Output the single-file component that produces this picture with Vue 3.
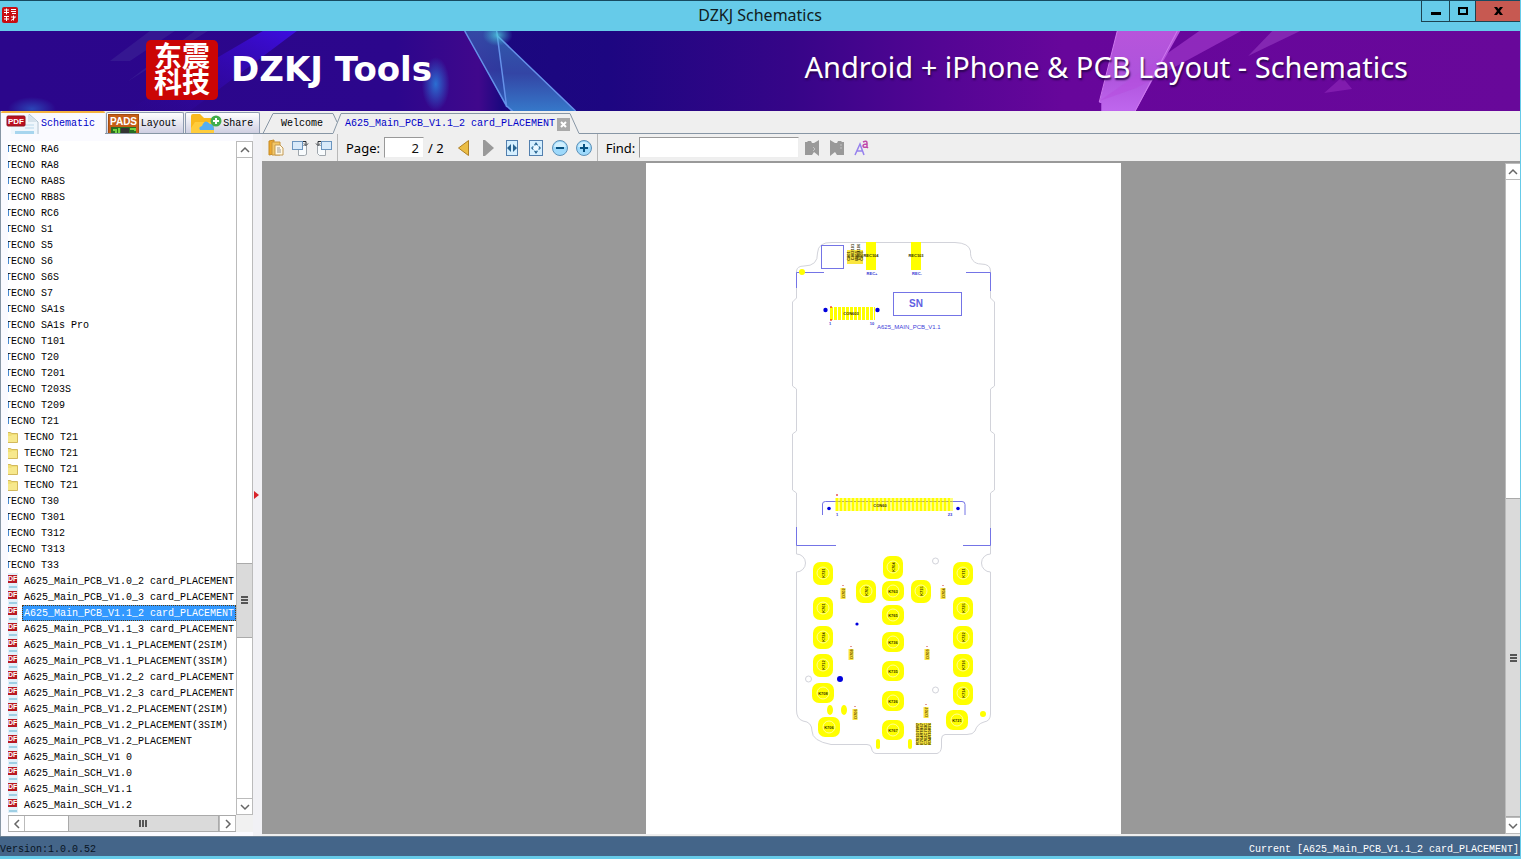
<script setup>
import { ref } from 'vue'

const folders = [
  'RA6', 'RA8', 'RA8S', 'RB8S', 'RC6', 'S1', 'S5', 'S6', 'S6S', 'S7', 'SA1s', 'SA1s Pro',
  'T101', 'T20', 'T201', 'T203S', 'T209', 'T21',
].map((n) => ({ kind: 'group', label: 'TECNO ' + n }))
const subFolders = [1, 2, 3, 4].map(() => ({ kind: 'folder', label: 'TECNO T21' }))
const moreFolders = ['T30', 'T301', 'T312', 'T313', 'T33'].map((n) => ({ kind: 'group', label: 'TECNO ' + n }))
const files = [
  'PCB_V1.0_2 card_PLACEMENT', 'PCB_V1.0_3 card_PLACEMENT', 'PCB_V1.1_2 card_PLACEMENT',
  'PCB_V1.1_3 card_PLACEMENT', 'PCB_V1.1_PLACEMENT(2SIM)', 'PCB_V1.1_PLACEMENT(3SIM)',
  'PCB_V1.2_2 card_PLACEMENT', 'PCB_V1.2_3 card_PLACEMENT', 'PCB_V1.2_PLACEMENT(2SIM)',
  'PCB_V1.2_PLACEMENT(3SIM)', 'PCB_V1.2_PLACEMENT', 'SCH_V1 0', 'SCH_V1.0', 'SCH_V1.1', 'SCH_V1.2',
].map((n) => ({ kind: 'pdf', label: 'A625_Main_' + n }))
const rows = [...folders, ...subFolders, ...moreFolders, ...files]

const current = ref('A625_Main_PCB_V1.1_2 card_PLACEMENT')
const page = ref('2')
const query = ref('')

function choose(row) {
  if (row.kind === 'pdf') current.value = row.label
}

const tallPads = [
  [823, 573, 'K731'], [823, 608, 'K761'], [823, 637, 'K724'], [823, 665, 'K712'],
  [866, 591, 'K702'], [893, 567, 'K704'], [921, 591, 'K715'],
  [963, 573, 'K711'], [963, 608, 'K725'], [963, 637, 'K722'], [963, 665, 'K716'], [963, 693, 'K714'],
]
const widePads = [
  [893, 591, 'K763'], [893, 615, 'K765'], [893, 642, 'K736'], [893, 671, 'K735'], [893, 701, 'K726'],
  [893, 730, 'K767'], [823, 693, 'K708'], [829, 727, 'K706'], [957, 720, 'K721'],
]
const parts = [
  [843, 593, 'D702'], [943, 593, 'D704'], [851, 654, 'D708'], [927, 654, 'D709'], [855, 714, 'D706'], [926, 712, 'D707'],
]
</script>

<template>
  <div class="window">
    <header class="titlebar">
      <svg class="app-icon" viewBox="0 0 16 16" aria-hidden="true">
        <rect width="16" height="16" rx="2" fill="#c80d12" />
        <path d="M2 3h5M4.500 1.500v6M2 5.500h5M9 2.500h5M9 4.500h5M10 6.500h4M2 9.500h5M4.500 9v5M2 12h5M9 10h5M11.500 8.500v5M9 13.500l4-3" stroke="#fff" fill="none" />
      </svg>
      <h1>DZKJ Schematics</h1>
      <div class="window-buttons">
        <button type="button" class="win min" aria-label="Minimize"><svg viewBox="0 0 12 12"><path d="M1 7h10v3H1z" /></svg></button>
        <button type="button" class="win max" aria-label="Maximize"><svg viewBox="0 0 12 12"><path d="M1 2h10v8H1zM3 4v4h6V4z" fill-rule="evenodd" /></svg></button>
        <button type="button" class="win close" aria-label="Close"><svg viewBox="0 0 12 12"><path d="M2 2h3l1.500 2L8 2h3L8 6l3 4H8L6.500 8 5 10H2l3-4z" /></svg></button>
      </div>
    </header>

    <section class="banner">
      <svg class="banner-art" viewBox="0 0 1521 80" preserveAspectRatio="none" aria-hidden="true">
        <defs>
          <linearGradient id="bg"><stop offset="0" stop-color="#2b068b" /><stop offset=".26" stop-color="#2c068c" /><stop offset=".315" stop-color="#40088c" /><stop offset=".33" stop-color="#1b087f" /><stop offset=".4" stop-color="#1d0681" /><stop offset=".52" stop-color="#360588" /><stop offset=".62" stop-color="#540594" /><stop offset=".7" stop-color="#67069b" /><stop offset="1" stop-color="#68089a" /></linearGradient>
          <linearGradient id="ray" x1="1" y1="0" x2="0" y2="1"><stop offset="0" stop-color="#3d0de0" /><stop offset="1" stop-color="#3007a0" stop-opacity="0" /></linearGradient>
          <linearGradient id="shard" x1="0" y1="0" x2="0" y2="1"><stop offset="0" stop-color="#3159ac" /><stop offset=".5" stop-color="#3345a5" /><stop offset="1" stop-color="#3678c9" /></linearGradient>
          <linearGradient id="pink" x1="0" y1="0" x2="0" y2="1"><stop offset="0" stop-color="#b755db" /><stop offset=".55" stop-color="#ae53dc" /><stop offset="1" stop-color="#bf67ee" /></linearGradient>
          <radialGradient id="glow"><stop offset="0" stop-color="#2b6ed2" /><stop offset="1" stop-color="#2b6ed2" stop-opacity="0" /></radialGradient>
          <radialGradient id="spark"><stop offset="0" stop-color="#4fd0e0" /><stop offset="1" stop-color="#42b6d8" stop-opacity="0" /></radialGradient>
        </defs>
        <rect width="1521" height="80" fill="url(#bg)" />
        <path d="M263 0h34L190 80h-64z" fill="url(#ray)" />
        <path d="M150 0h25l-45 30h-20zM195 0h13L127 51z" fill="#493a9e" opacity=".35" />
        <ellipse cx="436" cy="53" rx="14" ry="27" fill="url(#glow)" />
        <ellipse cx="32" cy="78" rx="24" ry="12" fill="url(#glow)" opacity=".6" />
        <path d="M465 0h32l10 77z" fill="url(#shard)" opacity=".8" />
        <path d="M498 5l78 75h-65l-5-6z" fill="url(#shard)" />
        <path d="M465 0l42 75 6 5M497 0l10 76M498 5l78 75" stroke="#6591e9" stroke-width="1.500" fill="none" />
        <ellipse cx="498" cy="4" rx="15" ry="11" fill="url(#spark)" opacity=".8" />
        <path d="M1118 0h63l-45 80h-34v-8h-2z" fill="url(#pink)" />
        <path d="M1200 0h42l-105 57-37 13z" fill="#b64bdd" opacity=".5" />
        <path d="M1273 0h28l-52 25z" fill="#a047c9" opacity=".5" />
        <path d="M1118 0l-18 71M1178 0l-42 80" stroke="#cf79ef" fill="none" />
        <path d="M1343 46l10 12-28 4z" fill="#8b25b7" opacity=".7" />
      </svg>
      <div class="seal"><span>东震</span><span>科技</span></div>
      <strong class="brand">DZKJ Tools</strong>
      <p class="slogan">Android + iPhone &amp; PCB Layout - Schematics</p>
    </section>

    <main class="work">
      <aside class="sidebar">
        <nav class="side-tabs">
          <button type="button" class="side-tab active">
            <svg width="34" height="20" viewBox="0 0 34 20" aria-hidden="true">
              <path d="M6 1h20l6 6v13H6z" fill="#eff6fc" />
              <path d="M24 0l9 8v12" fill="none" stroke="#abc0ce" /><path d="M23 0v8h9z" fill="#d5e2eb" />
              <path d="M10 17h19v3H10z" fill="#a7d5ee" /><path d="M20 11h9M20 14h9" stroke="#b9d8eb" />
              <rect x="2" y="2" width="18" height="10" rx="1" fill="#bd1020" stroke="#8f1420" />
              <text x="3" y="10" class="badge">PDF</text>
            </svg>
            <span>Schematic</span>
          </button>
          <button type="button" class="side-tab layout-tab">
            <svg width="31" height="19" viewBox="0 0 31 19" aria-hidden="true">
              <rect x=".5" y=".5" width="30" height="19" fill="#c45d16" stroke="#a44c10" />
              <path d="M3 13h25v6H3z" fill="#286d22" /><path d="M5 16h3v3M11 14v5M22 15h5v2" stroke="#71d341" stroke-width="2" fill="none" /><path d="M13 14h8v5h-8z" fill="#333" />
              <text x="2" y="11" class="pads">PADS</text>
            </svg>
            <span>Layout</span>
          </button>
          <button type="button" class="side-tab share-tab">
            <svg width="32" height="19" viewBox="0 0 32 19" aria-hidden="true">
              <path d="M1 2q0-2 2-2h7l4 4h7v15H1z" fill="#f9b91d" /><path d="M1 19v-5l4-6h19v11z" fill="#ffcc3c" />
              <path d="M10 16q-2-3 2-4 3-8 8-2 4-1 4 6z" fill="#55aef2" />
              <circle cx="26" cy="7" r="5.500" fill="#42ad4b" /><path d="M23 7h6M26 4v6" stroke="#fff" stroke-width="2" />
            </svg>
            <span>Share</span>
          </button>
        </nav>
        <div class="side-body">
          <div class="tree-pane">
            <div class="tree-view">
              <ul class="tree">
                <li v-for="(row, i) in rows" :key="i">
                  <button type="button" class="row" :class="[row.kind, { selected: row.label === current }]" @click="choose(row)">
                    <svg v-if="row.kind === 'folder'" width="16" height="16" viewBox="0 0 16 16" aria-hidden="true">
                      <path d="M1 13.500V3.500h7l2 1h5.500v9z" fill="#f1df75" stroke="#d3b95c" /><path d="M1 7h8l1-1h5v7H1z" fill="#f7e88c" />
                    </svg>
                    <svg v-else-if="row.kind === 'pdf'" width="16" height="16" viewBox="0 0 16 16" aria-hidden="true">
                      <path d="M4 0h12v16H4z" fill="#e3f0f9" /><path d="M7 13h8v2H7z" fill="#9ecfe4" />
                      <rect x="0" y="2" width="15" height="8" fill="#b91823" /><text x="6" y="8" class="df">DF</text>
                    </svg>
                    <span>{{ row.label }}</span>
                  </button>
                </li>
              </ul>
            </div>
            <div class="vbar">
              <button type="button" class="step" aria-label="Scroll up"><svg viewBox="0 0 10 10"><path d="M1 7l4-4 4 4" /></svg></button>
              <div class="before"></div>
              <div class="thumb"><i></i></div>
              <div class="after"></div>
              <button type="button" class="step" aria-label="Scroll down"><svg viewBox="0 0 10 10"><path d="M1 3l4 4 4-4" /></svg></button>
            </div>
            <div class="hbar">
              <button type="button" class="step" aria-label="Scroll left"><svg viewBox="0 0 10 10"><path d="M7 1L3 5l4 4" /></svg></button>
              <div class="before"></div>
              <div class="thumb"><i></i></div>
              <button type="button" class="step" aria-label="Scroll right"><svg viewBox="0 0 10 10"><path d="M3 1l4 4-4 4" /></svg></button>
            </div>
            <div class="corner"></div>
          </div>
          <button type="button" class="splitter" aria-label="Collapse panel"><svg width="5" height="8" viewBox="0 0 5 8"><path d="M0 0l5 4-5 4z" fill="#d8232a" /></svg></button>
        </div>
      </aside>

      <section class="document">
        <nav class="doc-tabs">
          <button type="button" class="doc-tab welcome">
            <svg class="edge" width="80" viewBox="0 0 80 23" aria-hidden="true"><path d="M1 22.500L11 2.500H71L75 11" /></svg>
            <span>Welcome</span>
          </button>
          <button type="button" class="doc-tab opened">
            <svg class="edge" width="247" viewBox="0 0 247 23" aria-hidden="true"><path d="M0 22.500L8 2.500H237L246 22.500" /></svg>
            <span>{{ current }}</span>
            <svg class="tab-close" viewBox="0 0 13 13" aria-hidden="true"><rect width="13" height="13" fill="#a9a9a9" /><path d="M4 4l5 5M9 4l-5 5" stroke="#fff" stroke-width="2" /></svg>
          </button>
          <div class="rest"></div>
        </nav>

        <div class="toolbar">
          <div class="tools first">
            <button type="button" class="tool" aria-label="Open"><svg viewBox="0 0 18 18"><path d="M2 2l5-1v14l-5 1z" fill="#eda82d" stroke="#c58a25" /><path d="M5 3h8v13H5z" fill="#f3c765" stroke="#ca963c" /><path d="M8 6h5l3 3v7H8z" fill="#fff8e4" stroke="#c39a55" /><path d="M10 9h3M10 11h4M10 13h4" stroke="#999" /></svg></button>
            <button type="button" class="tool" aria-label="Rotate right"><svg viewBox="0 0 18 18"><path d="M7.500 6.500h8v9l-2 1h-6z" fill="#f8fbfd" stroke="#a0a7ad" /><rect x="1.500" y="2.500" width="10" height="8" fill="#d8eafa" stroke="#6b95bf" /><path d="M12 2.500h3v3M13 4.500l2 2 2-2" stroke="#262b30" fill="none" /></svg></button>
            <button type="button" class="tool" aria-label="Rotate left"><svg viewBox="0 0 18 18"><path d="M2.500 6.500h8v10h-6l-2-2z" fill="#f8fbfd" stroke="#a0a7ad" /><rect x="6.500" y="2.500" width="10" height="8" fill="#d8eafa" stroke="#6b95bf" /><path d="M6 2.500H3v3M1 4.500l2 2 2-2" stroke="#262b30" fill="none" /></svg></button>
          </div>
          <div class="tools paging">
            <label for="page">Page:</label>
            <input id="page" v-model="page" type="text" />
            <span>/ 2</span>
          </div>
          <div class="tools view">
            <button type="button" class="tool" aria-label="Previous page"><svg viewBox="0 0 18 18"><path d="M13.500 1.500v15L3.500 9z" fill="#ebbd45" stroke="#af8126" /></svg></button>
            <button type="button" class="tool" aria-label="Next page"><svg viewBox="0 0 18 18"><path d="M4 1h2l9 8-9 8H4z" fill="#999" /></svg></button>
            <button type="button" class="tool" aria-label="Fit width"><svg viewBox="0 0 18 18"><rect x="3.500" y="1.500" width="11" height="15" fill="#d5efff" stroke="#527fae" /><path d="M8 5v8L4 9zM10 5v8l4-4z" fill="#286390" /></svg></button>
            <button type="button" class="tool" aria-label="Fit page"><svg viewBox="0 0 18 18"><rect x="2.500" y="1.500" width="13" height="15" fill="#d5efff" stroke="#527fae" /><path d="M9 3l2 3H7zM9 15l2-3H7zM4 9l2-2v4zM14 9l-2-2v4z" fill="#286390" /><circle cx="9" cy="9" r="3" fill="#eef9ff" stroke="#7aaed0" stroke-dasharray="2 1" /></svg></button>
            <button type="button" class="tool" aria-label="Zoom out"><svg viewBox="0 0 18 18"><circle cx="9" cy="9" r="7.500" fill="#9ed9fb" stroke="#5e91b8" /><path d="M3 8q1-5 6-5t6 5z" fill="#d0effe" /><path d="M5 9h8" stroke="#075282" stroke-width="2" /></svg></button>
            <button type="button" class="tool" aria-label="Zoom in"><svg viewBox="0 0 18 18"><circle cx="9" cy="9" r="7.500" fill="#9ed9fb" stroke="#5e91b8" /><path d="M3 8q1-5 6-5t6 5z" fill="#d0effe" /><path d="M5 9h8M9 5v8" stroke="#075282" stroke-width="2" /></svg></button>
          </div>
          <div class="tools finding">
            <label for="find">Find:</label>
            <input id="find" v-model="query" type="text" />
            <button type="button" class="tool" aria-label="Find previous"><svg viewBox="0 0 18 18"><path d="M2 3h2l1-1h3l1 2h2l5-3v16l-5-4-2 3H2z" fill="#999" /><path d="M10 8l2 2-2 2" stroke="#c2c2c2" fill="none" /></svg></button>
            <button type="button" class="tool" aria-label="Find next"><svg viewBox="0 0 18 18"><path d="M16 3h-2l-1-1h-3L9 4H7L2 1v16l5-4 2 3h7z" fill="#999" /><path d="M12 6h2M12 9h2" stroke="#c2c2c2" /></svg></button>
            <button type="button" class="tool" aria-label="Match case"><svg viewBox="0 0 18 18"><path d="M2 16L7 5l4 11M4 12h6" stroke="#9681ed" stroke-width="1.500" fill="none" /><path d="M10 3q4-2 4 1v5M14 5q-4 0-4 2t4 1l1 1" stroke="#c148ab" stroke-width="1.500" fill="none" /></svg></button>
          </div>
        </div>

        <div class="viewer">
          <div class="canvas">
            <svg class="sheet" viewBox="646 163 475 671" preserveAspectRatio="xMidYMin meet" role="img" aria-label="Board placement drawing">
              <path class="outline" d="M832 242.500H955Q969 243 970.500 251C970 259 974 264 981 264Q990.500 264 990.500 271V298L994.500 302V386L990.500 389V431L994.500 434V490L990.500 493V554A9 9 0 0 0 990.500 572V714Q990.500 721 984 722Q977 724 975 731Q973 734.500 967 734.500H945Q941.500 735 941.500 739V747Q941 752.500 937 753.500H876Q872 753 871.500 748Q871 744.500 867 744.500H831Q812 741 812 731Q812 722 803 721Q796.500 719 796.500 710V572A9 9 0 0 0 796.500 554V493L792.500 490V434L796.500 431V389L792.500 386V302L796.500 298V271Q797 266 804 266Q818 266 817.500 253Q818 242 832 242.500Z" />
              <g class="blue">
                <rect x="821.500" y="245.500" width="22" height="23" />
                <path d="M796.500 288V272.500H824M966 272.500h24.500V291M796.500 527v18.500H836M963 545.500h27.500V528" />
                <rect x="893.500" y="292.500" width="68" height="23" />
                <path d="M822.500 515V504q0-2.500 3-2.500H962q3 0 3 3V515" />
              </g>
              <g fill="#ff0">
                <rect x="866" y="242" width="10" height="28" /><rect x="911" y="242" width="10" height="28" />
                <circle cx="802" cy="272" r="3" />
                <ellipse cx="830" cy="710" rx="3" ry="5" /><ellipse cx="844" cy="710" rx="3" ry="5" />
                <rect x="876" y="739" width="4" height="10" rx="2" /><rect x="908" y="739" width="4" height="10" rx="2" /><circle cx="983" cy="714" r="3" />
              </g>
              <path d="M830 313.500h45" stroke="#ff0" stroke-width="13" stroke-dasharray="3 1" />
              <path d="M835.500 504.500h117" stroke="#ff0" stroke-width="13" stroke-dasharray="3 1" />
              <path d="M836 501.500h116" stroke="#b4a53a" stroke-width=".5" stroke-dasharray="2 1" />
              <g fill="#00d"><circle cx="825.500" cy="310" r="2.200" /><circle cx="877.500" cy="310" r="2.200" /><circle cx="829" cy="508.500" r="1.800" /><circle cx="958" cy="508.500" r="1.800" /><circle cx="857" cy="624" r="1.600" /><circle cx="840" cy="679" r="3" /></g>
              <g class="outline"><circle cx="935.500" cy="561" r="3" /><circle cx="935.500" cy="690" r="3" /><circle cx="808.500" cy="679" r="3" /></g>
              <path d="M830 307h2M830 320h2M836 495h2" stroke="#d00" />

              <g v-for="p in tallPads" :key="'t' + p[2]" :transform="`translate(${p[0]} ${p[1]})`">
                <rect x="-10" y="-11" width="20" height="23" rx="7" fill="#ff0" /><circle class="ring" r="6" />
                <text class="tiny" transform="rotate(-90)" y="1.500">{{ p[2] }}</text>
              </g>
              <g v-for="p in widePads" :key="'w' + p[2]" :transform="`translate(${p[0]} ${p[1]})`">
                <rect x="-11" y="-10" width="22" height="20" rx="7" fill="#ff0" /><circle class="ring" r="6" />
                <text class="tiny" y="1.500">{{ p[2] }}</text>
              </g>
              <g v-for="p in parts" :key="p[2]" :transform="`translate(${p[0]} ${p[1]})`">
                <rect x="-2.500" y="-5" width="5" height="11" fill="#fae63f" /><path d="M0-8v1" stroke="#c33" />
                <text class="tiny brown" transform="rotate(-90)" y="1.500">{{ p[2] }}</text>
              </g>
              <g transform="translate(850 256)">
                <rect x="-3" y="-6" width="16" height="14" fill="#fae63f" />
                <g transform="rotate(-90)"><text class="tiny" y="0">C801</text><text class="tiny" x="4" y="4">C802101</text><text class="tiny" y="8">R803</text><text class="tiny" x="4" y="10">D804106</text><text class="tiny" y="13">C805</text></g>
              </g>
              <g transform="translate(917 734)">
                <rect x="-1" y="-11" width="15" height="22" fill="#fae63f" />
                <g transform="rotate(-90)"><text class="tiny" y="2">R701D70R7</text><text class="tiny" y="6">E764R7B67</text><text class="tiny" y="10">C702C703C</text><text class="tiny" y="14">R74R70R76</text></g>
              </g>
              <text class="tiny" x="871" y="257">REC104</text><text class="tiny" x="916" y="257">REC103</text>
              <text class="tiny blue-text" x="872" y="275">REC+</text><text class="tiny blue-text" x="917" y="275">REC-</text>
              <text class="tiny" x="851" y="315">CON603</text><text class="tiny" x="880" y="507">CON60</text>
              <text class="tiny blue-text" x="830" y="325">1</text><text class="tiny blue-text" x="872" y="325">10</text>
              <text class="tiny blue-text" x="837" y="516">1</text><text class="tiny blue-text" x="950" y="516">23</text>
              <text class="sn" x="909" y="307">SN</text>
              <text class="board-name" x="877" y="329">A625_MAIN_PCB_V1.1</text>
            </svg>
          </div>
          <div class="vbar doc-bar">
            <button type="button" class="step" aria-label="Page up"><svg viewBox="0 0 10 10"><path d="M1 7l4-4 4 4" /></svg></button>
            <div class="before"></div>
            <div class="thumb"><i></i></div>
            <button type="button" class="step" aria-label="Page down"><svg viewBox="0 0 10 10"><path d="M1 3l4 4 4-4" /></svg></button>
          </div>
        </div>
      </section>
    </main>

    <footer class="status"><span>Version:1.0.0.52</span><span class="now">Current [{{ current }}]</span></footer>
  </div>
</template>

<style>
body { margin: 0; overflow: hidden; }
</style>

<style scoped>
* { box-sizing: border-box; }
button { margin: 0; padding: 0; border: 0; background: none; font: inherit; color: inherit; }
svg { display: block; flex: none; }
.window { height: 100vh; display: flex; flex-direction: column; background: #efefef; border-right: 1px solid #66cbe9; border-bottom: 3px solid #66cbe9; font: 10px/16px "Liberation Mono", monospace; color: #000; }

.titlebar { flex: none; height: 31px; display: grid; grid-template-columns: 100px 1fr 100px; background: #66cbe9; border-top: 1px solid #174a60; }
.app-icon { width: 16px; height: 16px; margin: 6px 2px; }
h1 { margin: 0; text-align: center; font: 16px/29px "Noto Sans", sans-serif; color: #101c22; }
.window-buttons { display: flex; justify-content: flex-end; align-items: flex-start; }
.win { height: 21px; display: flex; align-items: center; justify-content: center; border: 1px solid #1d4250; border-top: 0; border-right: 0; }
.win svg { width: 12px; height: 12px; }
.min { width: 28px; }
.max { width: 26px; }
.close { width: 45px; background: #c75951; }

.banner { position: relative; flex: none; height: 80px; display: flex; align-items: center; padding: 0 112px 0 146px; overflow: hidden; color: #fff; }
.banner-art { position: absolute; inset: 0; width: 100%; height: 100%; }
.seal { position: relative; width: 72px; height: 60px; margin-bottom: 2px; padding-bottom: 4px; border-radius: 5px; background: #cb0505; display: flex; flex-direction: column; align-items: center; justify-content: center; font: bold 28px/26px "Noto Sans CJK SC", sans-serif; }
.brand { position: relative; margin: 0 0 4px 13px; font: bold 34px/40px "DejaVu Sans", sans-serif; white-space: nowrap; }
.slogan { position: relative; margin: 0 0 8px auto; font: 29px/40px "Noto Sans", sans-serif; text-shadow: 1px 2px 2px #2b0550; white-space: nowrap; }

.work { flex: 1; min-height: 0; display: flex; }
.sidebar { flex: none; width: 262px; display: flex; flex-direction: column; border-left: 1px solid #8796a5; background: #fafaff; }
.side-tabs { flex: none; height: 23px; display: flex; align-items: flex-end; gap: 1px; padding-right: 2px; background: #efefef; border-bottom: 1px solid #8796a5; }
.side-tab { height: 21px; flex: 1 1 74px; display: flex; align-items: center; gap: 1px; padding: 1px 2px 0 1px; border: 1px solid #8e9bb0; border-bottom: 0; border-radius: 2px 2px 0 0; background: linear-gradient(#fff, #cfcfe2); overflow: hidden; }
.side-tab.active { height: 23px; flex: 1 1 103px; margin-bottom: -1px; padding-left: 4px; gap: 2px; border: 0; border-top: 2px solid #f4b23e; background: #fafaff; color: #0000c8; }
.side-tab.layout-tab { flex-basis: 78px; gap: 2px; }
.side-tab.share-tab { padding-left: 4px; }
.badge { font: bold 8px "Liberation Sans", sans-serif; fill: #fff; }
.pads { font: bold 10px "Liberation Sans", sans-serif; fill: #fff; }
.side-body { flex: 1; min-height: 0; display: flex; }
.tree-pane { flex: 1; min-width: 0; margin: 7px 0 4px 7px; display: grid; grid-template: minmax(0, 1fr) 17px / minmax(0, 1fr) 17px; background: #fff; }
.tree-view { overflow: hidden; }
.tree { list-style: none; margin: 0 0 0 -6px; padding: 0; }
.row { width: 100%; height: 16px; display: flex; align-items: center; gap: 4px; white-space: nowrap; text-align: left; }
.row.group { padding-left: 3px; }
.row span { height: 16px; line-height: 17px; }
.row:not(.group) span { flex: 1; padding-left: 2px; }
.row.selected span { background: #3399ff; color: #fff; outline: 1px dotted #5b3b12; outline-offset: -1px; }
.df { font: bold 7px "Liberation Sans", sans-serif; fill: #fff; }

.vbar { display: flex; flex-direction: column; background: #fff; border-left: 1px solid #bbb; border-right: 1px solid #bbb; }
.hbar { display: flex; background: #fff; border-top: 1px solid #aaa; border-bottom: 1px solid #aaa; }
.corner { background: #f1f1f1; }
.step { flex: none; width: 17px; height: 17px; display: flex; align-items: center; justify-content: center; background: #fff; border: 1px solid #bbb; }
.vbar .step { width: 100%; border-width: 1px 0; }
.hbar .step { height: 100%; border-width: 0 1px; }
.step svg { width: 10px; height: 10px; fill: none; stroke: #666; stroke-width: 1.5px; }
.vbar .before { flex: 407; }
.vbar .thumb { flex: 73; border: 1px solid #aaa; border-width: 1px 0; }
.vbar .after { flex: 161; }
.thumb { display: flex; align-items: center; justify-content: center; background: #dadada; }
.vbar .thumb i { width: 7px; height: 8px; background: repeating-linear-gradient(#555 0 2px, transparent 2px 3px); }
.hbar .before { flex: 43; }
.hbar .thumb { flex: 151; border: 1px solid #aaa; border-width: 0 1px; }
.hbar .thumb i { width: 8px; height: 7px; background: repeating-linear-gradient(90deg, #555 0 2px, transparent 2px 3px); }
.splitter { flex: none; width: 9px; display: flex; align-items: center; padding: 20px 0 0 1px; background: #f1f1f5; }

.document { flex: 1; min-width: 0; display: flex; flex-direction: column; }
.doc-tabs { flex: none; height: 23px; display: flex; background: #efefef; }
.doc-tab { position: relative; height: 23px; display: flex; align-items: center; padding-top: 3px; }
.doc-tab.welcome { width: 71px; padding-left: 19px; border-bottom: 1px solid #8796a5; }
.doc-tab.opened { padding-left: 12px; padding-right: 9px; gap: 2px; color: #0000c8; }
.edge { position: absolute; left: 0; top: 0; height: 23px; fill: none; stroke: #8796a5; }
.tab-close { width: 13px; height: 13px; }
.rest { flex: 1; border-bottom: 1px solid #8796a5; }

.toolbar { flex: none; height: 29px; display: flex; align-items: center; border-bottom: 2px solid #999; background: #efefef; font: 13px/20px "Noto Sans", sans-serif; }
.tools { height: 27px; display: flex; align-items: center; }
.tool { flex: none; width: 18px; height: 18px; }
.tool svg { width: 18px; height: 18px; }
.tools.first { gap: 6px; padding: 0 4px 0 5px; border-right: 1px solid #b8b8b8; }
.tools.paging { padding: 0 2px 0 8px; }
.paging label { width: 38px; }
.paging span { padding-left: 4px; }
.tools input { height: 21px; padding: 0 4px; border: 1px solid #999; border-right-color: #eee; border-bottom-color: #eee; border-radius: 0; background: #fff; font: 13px/20px "Noto Sans", sans-serif; color: #111; outline: none; }
#page { width: 40px; text-align: right; }
.tools.view { gap: 6px; padding: 0 4px 0 9px; border-right: 1px solid #b8b8b8; }
.tools.finding { padding-left: 8px; gap: 7px; }
.finding label { width: 26px; white-space: nowrap; }
#find { width: 160px; margin-right: -3px; }

.viewer { flex: 1; min-height: 0; display: flex; border-bottom: 2px solid #eee; }
.canvas { flex: 1; min-width: 0; display: flex; justify-content: center; background: #999; overflow: hidden; }
.sheet { width: 475px; height: 100%; background: #fff; }
.doc-bar { flex: none; width: 15px; border-right: 0; }
.doc-bar .before { flex: 322; }
.doc-bar .thumb { flex: 321; }
.outline { fill: none; stroke: #d2d3da; stroke-width: 1px; }
.blue { fill: none; stroke: #7474e6; stroke-width: 1px; }
.ring { fill: none; stroke: #ffff96; stroke-width: 1px; }
.tiny { font: bold 4px "Liberation Sans", sans-serif; text-anchor: middle; fill: #332f00; }
.brown { fill: #6b4a00; }
.blue-text { fill: #3434d2; }
.sn { font: bold 10px "Liberation Sans", sans-serif; fill: #6060e2; }
.board-name { font: 6px "Liberation Sans", sans-serif; fill: #4040d8; }

.status { flex: none; height: 20px; padding-top: 4px; display: flex; justify-content: space-between; background: #446589; font-size: 10px; line-height: 17px; color: #08141f; border-top: 1px solid #6b7f92; }
.now { color: #fff; padding-right: 1px; }
</style>
